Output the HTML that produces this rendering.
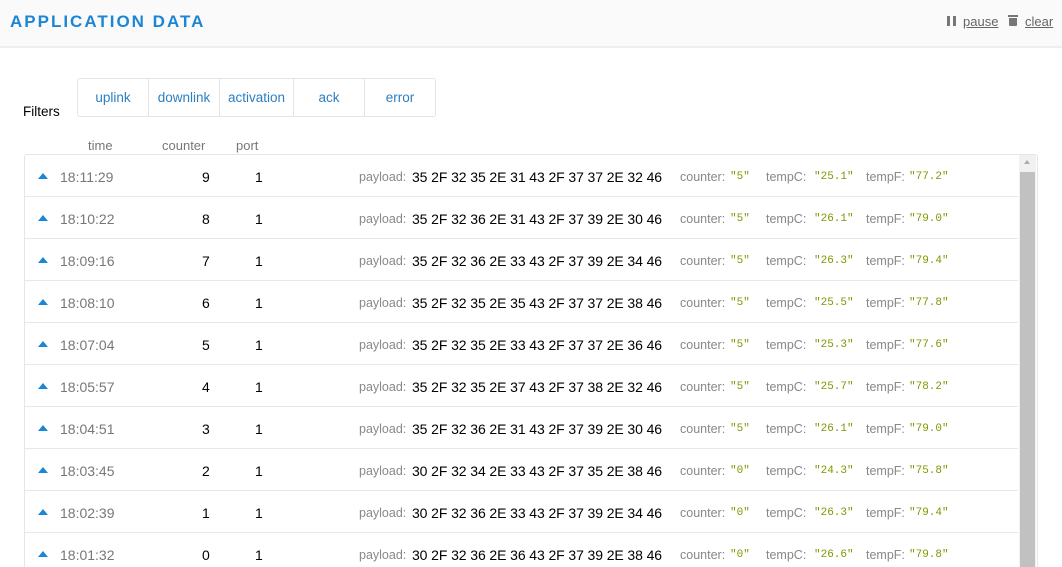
<!DOCTYPE html><html><head><style>
html,body{margin:0;width:1062px;height:567px;overflow:hidden}
body{background:#fff;font-family:"Liberation Sans",sans-serif;position:relative}
.hdr{position:absolute;left:0;top:0;width:1062px;height:46px;background:#fafafa;border-bottom:2px solid #eee}
.ttl{position:absolute;left:10px;top:12px;font-size:17px;font-weight:bold;letter-spacing:2px;color:#1c86d6}
.act{position:absolute;top:14px;font-size:13px;color:#666;text-decoration:underline}
.flt{position:absolute;left:77px;top:78px;height:37px;border:1px solid #e4e4e4;border-radius:3px;display:flex}
.flt div{border-right:1px solid #e4e4e4;color:#2d7fc0;font-size:13.5px;line-height:37px;text-align:center}
.flt div:last-child{border-right:none}
.th{position:absolute;top:138px;font-size:13px;color:#777}
.list{position:absolute;left:24px;top:154px;width:1012px;height:420px;border:1px solid #e6e6e6;border-radius:3px;overflow:hidden}
.row{position:absolute;left:0;width:993px;height:41px;border-bottom:1px solid #e8e8e8;font-size:14px}
.row span{position:absolute;top:14px;white-space:nowrap}
.row span.g{top:15px}
.tri{left:13px;top:18px!important;width:0;height:0;border-left:5px solid transparent;border-right:5px solid transparent;border-bottom:6px solid #1c86d6}
.g{color:#888;font-size:12.5px}
.v{font-family:"Liberation Mono",monospace;color:#7a9a00;font-size:11px}
.sb{position:absolute;left:994px;top:0;width:17px;height:430px;background:#f1f1f1}
</style></head><body>
<div class="hdr"><div class="ttl">APPLICATION DATA</div>
<div style="position:absolute;left:947px;top:16px;width:3px;height:10px;background:#777"></div>
<div style="position:absolute;left:953px;top:16px;width:3px;height:10px;background:#777"></div>
<span class="act" style="left:963px">pause</span>
<div style="position:absolute;left:1008px;top:15px;width:10px;height:2px;background:#777"></div>
<div style="position:absolute;left:1009px;top:18px;width:8px;height:8px;background:#777;border-radius:0 0 1px 1px"></div>
<span class="act" style="left:1025px">clear</span></div>
<div style="position:absolute;left:23px;top:104px;font-size:13.5px">Filters</div>
<div class="flt"><div style="width:70px">uplink</div><div style="width:70px">downlink</div><div style="width:73px">activation</div><div style="width:70px">ack</div><div style="width:70px">error</div></div>
<div class="th" style="left:88px">time</div><div class="th" style="left:162px">counter</div><div class="th" style="left:236px">port</div>
<div class="list" id="L"><div class="sb"><div style="position:absolute;top:5px;left:5px;border-left:3px solid transparent;border-right:3px solid transparent;border-bottom:4px solid #aaa"></div><div style="position:absolute;top:17px;left:1px;width:15px;height:420px;background:#c1c1c1"></div></div></div>
<script>
var d=[["18:11:29",9,"35 2F 32 35 2E 31 43 2F 37 37 2E 32 46","5","25.1","77.2"],["18:10:22",8,"35 2F 32 36 2E 31 43 2F 37 39 2E 30 46","5","26.1","79.0"],["18:09:16",7,"35 2F 32 36 2E 33 43 2F 37 39 2E 34 46","5","26.3","79.4"],["18:08:10",6,"35 2F 32 35 2E 35 43 2F 37 37 2E 38 46","5","25.5","77.8"],["18:07:04",5,"35 2F 32 35 2E 33 43 2F 37 37 2E 36 46","5","25.3","77.6"],["18:05:57",4,"35 2F 32 35 2E 37 43 2F 37 38 2E 32 46","5","25.7","78.2"],["18:04:51",3,"35 2F 32 36 2E 31 43 2F 37 39 2E 30 46","5","26.1","79.0"],["18:03:45",2,"30 2F 32 34 2E 33 43 2F 37 35 2E 38 46","0","24.3","75.8"],["18:02:39",1,"30 2F 32 36 2E 33 43 2F 37 39 2E 34 46","0","26.3","79.4"],["18:01:32",0,"30 2F 32 36 2E 36 43 2F 37 39 2E 38 46","0","26.6","79.8"]];
var h="";d.forEach(function(r,i){h+='<div class="row" style="top:'+(i*42)+'px"><span class="tri"></span><span style="left:35px;color:#777">'+r[0]+'</span><span style="left:177px">'+r[1]+'</span><span style="left:230px">1</span><span class="g" style="left:334px">payload:</span><span style="left:387px;font-size:14px;letter-spacing:-0.1px">'+r[2]+'</span><span class="g" style="left:655px">counter:</span><span class="v" style="left:705px;top:16px">"'+r[3]+'"</span><span class="g" style="left:741px">tempC:</span><span class="v" style="left:789px;top:16px">"'+r[4]+'"</span><span class="g" style="left:841px">tempF:</span><span class="v" style="left:884px;top:16px">"'+r[5]+'"</span></div>';});
document.getElementById("L").insertAdjacentHTML("afterbegin",h);
</script>
</body></html>
